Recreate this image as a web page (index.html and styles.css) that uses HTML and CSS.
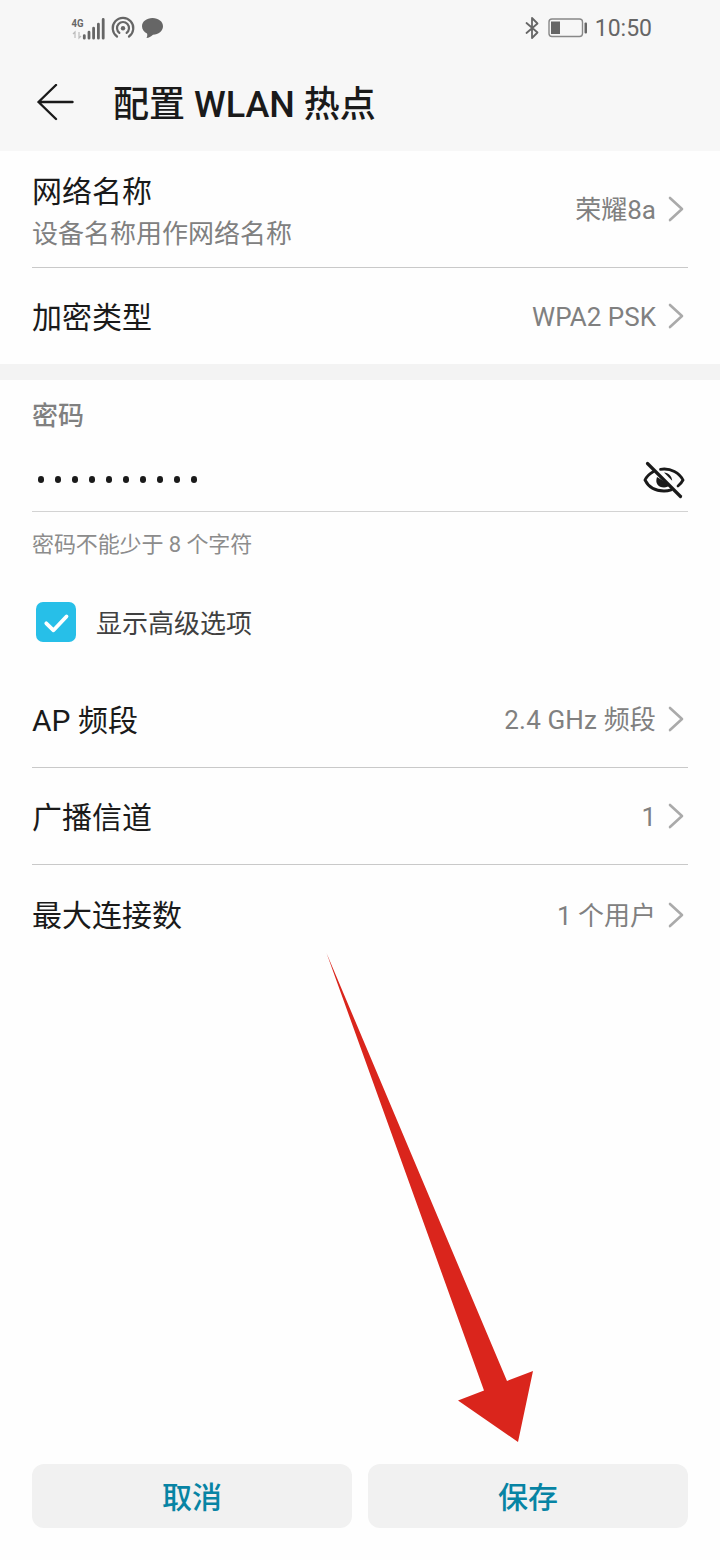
FILE: index.html
```html
<!DOCTYPE html>
<html lang="zh-CN">
<head>
<meta charset="utf-8">
<title>配置 WLAN 热点</title>
<link rel="stylesheet" href="styles.css">
</head>
<body>
<div class="screen">
  <header class="top">
    <div class="status">
      <div class="status-left">
        <svg class="signal" width="36" height="26" viewBox="0 0 36 26">
          <text class="net" x="0.5" y="12" textLength="12" lengthAdjust="spacingAndGlyphs">4G</text>
          <path d="M4 23v-6l-2 2M8 17v6l2-2" fill="none" stroke="#bcbcbc" stroke-width="1.2"/>
          <path d="M13.3 23.2v-2.6M18 23.2v-6M22.6 23.2v-10M27.4 23.2v-14M32.2 23.2V4.5" stroke="#666" stroke-width="2.8" stroke-linecap="round"/>
        </svg>
        <svg class="hotspot" width="24" height="24" viewBox="0 0 24 24" fill="none" stroke="#666" stroke-width="2.2" stroke-linecap="round">
          <path d="M6 20.5A10.3 10.3 0 1 1 18 20.5"/>
          <path d="M8.4 16.8A6 6 0 1 1 15.6 16.8"/>
          <circle cx="12" cy="12.3" r="2.2" fill="#666" stroke="none"/>
        </svg>
        <svg class="chat" width="24" height="24" viewBox="0 0 24 24">
          <path d="M11.5 2C17.500 2 22 5.600 22 10.300S17.500 18.800 12 18.800C10 20.800 7.800 22 5.500 22C6.400 20.600 6.500 19 6 17.600C3 16 1 13.400 1 10.300C1 5.600 5.500 2 11.500 2Z" fill="#666"/>
        </svg>
      </div>
      <div class="status-right">
        <svg width="14" height="24" viewBox="0 0 14 24" fill="none" stroke="#666" stroke-width="1.8" stroke-linejoin="round" stroke-linecap="round">
          <path d="M1.500 7l11 9.500L7 22V2l5.500 5.500L1.500 17"/>
        </svg>
        <svg class="battery" width="40" height="20" viewBox="0 0 40 20">
          <rect x="1" y="1" width="33.500" height="17.500" rx="3" fill="none" stroke="#888" stroke-width="1.400"/>
          <rect x="3" y="3.500" width="9" height="12.500" fill="#666"/>
          <rect x="36.500" y="4.500" width="2.500" height="11" rx="1" fill="#666"/>
        </svg>
        <span class="clock">10:50</span>
      </div>
    </div>
    <div class="appbar">
      <svg width="38" height="38" viewBox="0 0 38 38" fill="none" stroke="#1a1a1a" stroke-width="2.400" stroke-linecap="round" stroke-linejoin="round">
        <path d="M20 1L2.500 18l17.500 17M2.500 18h34"/>
      </svg>
      <h1 class="title">配置 WLAN 热点</h1>
    </div>
  </header>

  <section class="group">
    <div class="row tall line">
      <div class="labels">
        <div class="label">网络名称</div>
        <div class="sub">设备名称用作网络名称</div>
      </div>
      <div class="value">荣耀8a</div>
      <svg class="chevron" viewBox="0 0 16 26"><path d="M2 2l12 11L2 24"/></svg>
    </div>
    <div class="row second">
      <div class="label">加密类型</div>
      <div class="value">WPA2 PSK</div>
      <svg class="chevron" viewBox="0 0 16 26"><path d="M2 2l12 11L2 24"/></svg>
    </div>
  </section>

  <div class="band"></div>

  <section class="group">
    <div class="pass-label">密码</div>
    <div class="pass-field">
      <div class="dots"><i></i><i></i><i></i><i></i><i></i><i></i><i></i><i></i><i></i><i></i></div>
      <svg class="eye" width="44" height="40" viewBox="0 0 44 40" fill="none" stroke="#1a1a1a" stroke-width="2.800" stroke-linecap="round">
        <path d="M11.500 11.500C7.500 13.700 4.500 16.800 3 20C6.500 27 13.500 31 22 31C24.500 31 27 30.600 29.200 29.900"/>
        <path d="M18.500 9.300C29 7.800 37.500 12.800 41 20C39.800 22.400 38.100 24.400 36 26"/>
        <path d="M15 17C12.800 23 16 27.500 22 27.500C24.500 27.500 26.600 26.600 28 25Z" fill="#1a1a1a" stroke="none"/>
        <path d="M22 12.500C26.500 12.700 29.800 16.200 30.200 20.800Z" fill="#1a1a1a" stroke="none"/>
        <path d="M5.500 3.500L38.500 36.500" stroke-width="3.200"/>
      </svg>
    </div>
    <div class="hint">密码不能少于 8 个字符</div>
    <div class="check-row">
      <span class="checkbox">
        <svg width="40" height="40" viewBox="0 0 40 40" fill="none" stroke="#fff" stroke-width="3.800" stroke-linecap="round" stroke-linejoin="round"><path d="M10.300 21.300l7.200 7L30.500 14.500"/></svg>
      </span>
      <span class="check-text">显示高级选项</span>
    </div>
    <div class="row line">
      <div class="label">AP 频段</div>
      <div class="value wide">2.4 GHz 频段</div>
      <svg class="chevron" viewBox="0 0 16 26"><path d="M2 2l12 11L2 24"/></svg>
    </div>
    <div class="row line">
      <div class="label">广播信道</div>
      <div class="value">1</div>
      <svg class="chevron" viewBox="0 0 16 26"><path d="M2 2l12 11L2 24"/></svg>
    </div>
    <div class="row last">
      <div class="label">最大连接数</div>
      <div class="value">1 个用户</div>
      <svg class="chevron" viewBox="0 0 16 26"><path d="M2 2l12 11L2 24"/></svg>
    </div>
  </section>

  <footer class="actions">
    <button class="btn">取消</button>
    <button class="btn">保存</button>
  </footer>

  <svg class="pointer" width="210" height="492" viewBox="325 952 210 492">
    <path d="M326.500 953L484 1390.500L458 1400.500L518 1442L533 1371L507 1381Z" fill="#da251c"/>
  </svg>
</div>
</body>
</html>
```
FILE: styles.css
```css
* { box-sizing: border-box; }
body {
  margin: 0;
  background: #fefefe;
  color: #1a1a1a;
  font-family: Roboto, "Noto Sans CJK SC", sans-serif;
}
svg { display: block; flex: none; }
.screen {
  position: relative;
  display: flex;
  flex-direction: column;
  width: 720px;
  height: 1560px;
  overflow: hidden;
}
.top { height: 151px; background: #f7f7f7; }
.status {
  display: flex;
  justify-content: space-between;
  height: 55px;
  padding: 0 68px 0 71px;
}
.status-left, .status-right { display: flex; align-items: center; }
.net { font: 700 11.5px Roboto, sans-serif; fill: #666; }
.hotspot { margin-left: 4px; }
.chat { margin-left: 6px; }
.battery { margin-left: 9px; }
.clock { margin-left: 7px; padding-top: 2px; font-size: 23px; line-height: 28px; color: #666; }
.appbar {
  display: flex;
  align-items: center;
  height: 96px;
  padding-left: 36px;
}
.title {
  margin: 0 0 0 39px;
  padding-top: 3px;
  font-size: 36px;
  font-weight: 500;
  line-height: 48px;
}
.group { padding: 0 32px; }
.row { display: flex; align-items: center; height: 97px; }
.line { border-bottom: 1px solid #c9c9c9; }
.tall { height: 117px; }
.second { height: 96px; }
.label { padding-top: 3px; font-size: 30px; line-height: 42px; }
.labels { padding-top: 4px; }
.sub { font-size: 26px; line-height: 42px; color: #808080; }
.value { margin-left: auto; padding-top: 2px; font-size: 26px; line-height: 40px; color: #808080; }
.wide { letter-spacing: 0.15px; }
.chevron {
  width: 16px;
  height: 26px;
  margin: 0 4px 0 12px;
  fill: none;
  stroke: #aaa;
  stroke-width: 2.6;
  stroke-linecap: round;
  stroke-linejoin: round;
}
.last { height: 99px; }
.band { height: 16px; background: #f3f3f3; }
.pass-label {
  padding-top: 16px;
  font-size: 26px;
  font-weight: 500;
  line-height: 40px;
  color: #808080;
}
.pass-field {
  display: flex;
  align-items: center;
  justify-content: space-between;
  height: 76px;
  padding: 12px 2px 0 6px;
  border-bottom: 1px solid #d3d3d3;
}
.dots { display: flex; gap: 10.6px; }
.dots i { width: 6.4px; height: 7px; border-radius: 50%; background: #1a1a1a; }
.hint { padding-top: 17px; font-size: 22px; line-height: 32px; letter-spacing: -0.1px; color: #8c8c8c; }
.check-row { display: flex; align-items: center; height: 40px; margin: 41px 0 29px 4px; }
.checkbox { width: 40px; height: 40px; border-radius: 7px; background: #27bfe8; }
.check-text { margin-left: 20px; padding-top: 4px; font-size: 26px; line-height: 40px; color: #404040; }
.actions { display: flex; gap: 16px; margin-top: auto; padding: 0 32px 32px; }
.btn {
  flex: 1;
  height: 64px;
  padding: 3px 0 0;
  border: 0;
  border-radius: 12px;
  background: #f1f1f1;
  color: #0784a4;
  font: 500 30px/61px Roboto, "Noto Sans CJK SC", sans-serif;
}
/* Arrow drawn over the page, pointing at the save button */
.pointer { position: absolute; left: 325px; top: 952px; }
```
